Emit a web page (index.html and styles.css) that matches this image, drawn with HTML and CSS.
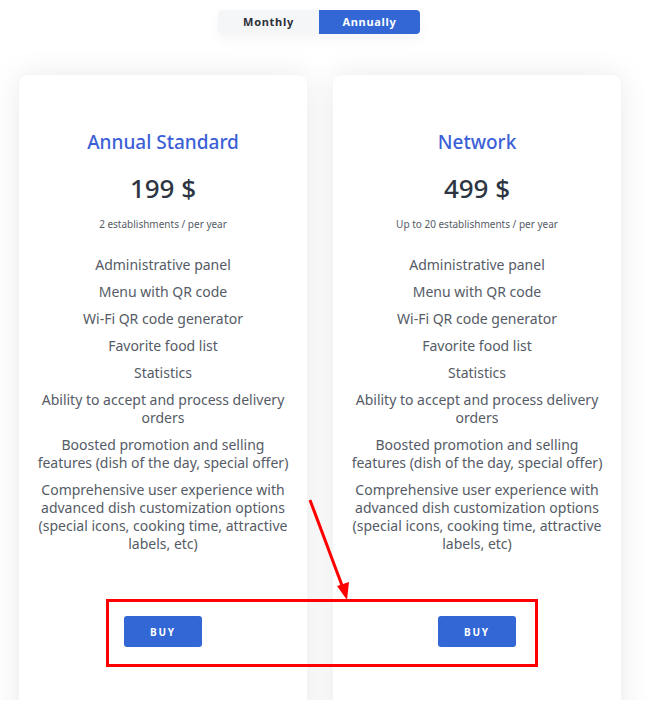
FILE: index.html
```html
<!DOCTYPE html>
<html lang="en">
<head>
<meta charset="utf-8">
<title>Pricing</title>
<link rel="stylesheet" href="styles.css">
</head>
<body>
<section class="pricing">
  <div class="container">
    <div class="toggle">
      <button class="toggle-btn">Monthly</button>
      <button class="toggle-btn active">Annually</button>
    </div>
    <div class="cards">
      <div class="card">
        <h2 class="plan">Annual Standard</h2>
        <div class="price">199 $</div>
        <div class="note">2 establishments / per year</div>
        <ul class="features">
          <li>Administrative panel</li>
          <li>Menu with QR code</li>
          <li>Wi-Fi QR code generator</li>
          <li>Favorite food list</li>
          <li>Statistics</li>
          <li>Ability to accept and process delivery orders</li>
          <li>Boosted promotion and selling features (dish of the day, special offer)</li>
          <li>Comprehensive user experience with advanced dish customization options (special icons, cooking time, attractive labels, etc)</li>
        </ul>
        <button class="buy">BUY</button>
      </div>
      <div class="card">
        <h2 class="plan">Network</h2>
        <div class="price">499 $</div>
        <div class="note">Up to 20 establishments / per year</div>
        <ul class="features">
          <li>Administrative panel</li>
          <li>Menu with QR code</li>
          <li>Wi-Fi QR code generator</li>
          <li>Favorite food list</li>
          <li>Statistics</li>
          <li>Ability to accept and process delivery orders</li>
          <li>Boosted promotion and selling features (dish of the day, special offer)</li>
          <li>Comprehensive user experience with advanced dish customization options (special icons, cooking time, attractive labels, etc)</li>
        </ul>
        <button class="buy">BUY</button>
      </div>
    </div>
  </div>
</section>
<svg class="annotation" width="649" height="711" viewBox="0 0 649 711">
  <rect x="107.5" y="600.5" width="429" height="65" fill="none" stroke="#ff0000" stroke-width="3"/>
  <line x1="310" y1="500" x2="343" y2="588" stroke="#ff0000" stroke-width="3"/>
  <polygon points="347,600 337,586 349,582" fill="#ff0000"/>
</svg>
</body>
</html>
```
FILE: styles.css
```css
* { box-sizing: border-box; }
html, body { margin: 0; padding: 0; background: #fff; }
body {
  font-family: "Noto Sans", "DejaVu Sans", sans-serif;
  width: 649px;
  height: 711px;
  position: relative;
  overflow: hidden;
}
.pricing {
  height: 700px;
  overflow: hidden;
  background: #fff;
}
.container {
  width: 602px;
  margin-left: 19px;
  padding-top: 10px;
}
.toggle {
  display: flex;
  width: 202px;
  margin: 0 auto 0 199px;
  border-radius: 4px;
  overflow: hidden;
  box-shadow: 0 6px 14px rgba(0,0,0,0.04);
}
.toggle-btn {
  flex: 1;
  height: 24px;
  border: 0;
  padding: 0 0 1px;
  font-family: inherit;
  font-size: 11px;
  font-weight: 700;
  letter-spacing: 0.7px;
  color: #2b2f38;
  background: #f5f6f8;
}
.toggle-btn.active {
  background: #3367d6;
  color: #fff;
}
.cards {
  display: flex;
  gap: 26px;
  margin-top: 41px;
}
.card {
  width: 288px;
  height: 700px;
  background: #fff;
  border-radius: 9px;
  box-shadow: 0 0 30px rgba(0,0,0,0.09);
  display: flex;
  flex-direction: column;
  align-items: center;
  padding-top: 55px;
  text-align: center;
}
.plan {
  margin: 0;
  font-size: 19px;
  line-height: 24px;
  font-weight: 500;
  color: #3b5fd6;
}
.price {
  margin-top: 18px;
  font-size: 26px;
  line-height: 32px;
  font-weight: 500;
  color: #2d3542;
}
.note {
  margin-top: 13px;
  font-size: 10px;
  line-height: 14px;
  color: #555b66;
}
.features {
  list-style: none;
  margin: 25px 0 0;
  padding: 0 16px;
  display: flex;
  flex-direction: column;
  gap: 9px;
  font-size: 14px;
  line-height: 18px;
  color: #555b66;
}
.buy {
  margin-top: 63px;
  width: 78px;
  height: 31px;
  border: 0;
  border-radius: 3px;
  background: #3367d6;
  color: #fff;
  font-family: inherit;
  font-size: 10px;
  font-weight: 700;
  letter-spacing: 1.8px;
}
.annotation {
  position: absolute;
  left: 0;
  top: 0;
  pointer-events: none;
}
```
